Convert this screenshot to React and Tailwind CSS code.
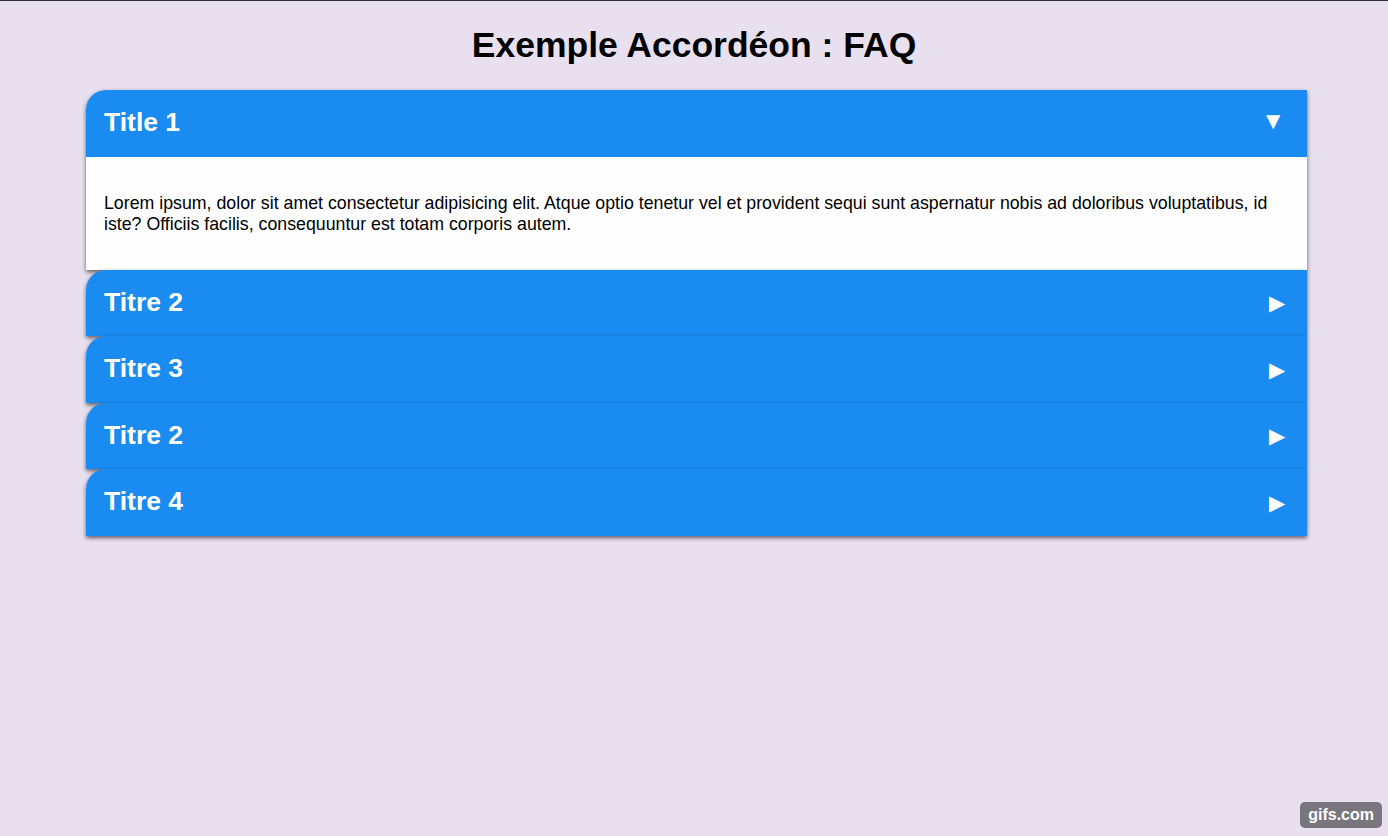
import { useState } from "react";

const items = [
  {
    title: "Title 1",
    body: "Lorem ipsum, dolor sit amet consectetur adipisicing elit. Atque optio tenetur vel et provident sequi sunt aspernatur nobis ad doloribus voluptatibus, id iste? Officiis facilis, consequuntur est totam corporis autem.",
  },
  { title: "Titre 2", body: "Lorem ipsum dolor sit amet consectetur adipisicing elit." },
  { title: "Titre 3", body: "Lorem ipsum dolor sit amet consectetur adipisicing elit." },
  { title: "Titre 2", body: "Lorem ipsum dolor sit amet consectetur adipisicing elit." },
  { title: "Titre 4", body: "Lorem ipsum dolor sit amet consectetur adipisicing elit." },
];

export default function App() {
  const [open, setOpen] = useState(0);

  return (
    <div className="relative min-h-[836px] bg-[#e9e0ef] border-t border-[#2d2f36] font-['Liberation_Sans',Arial,sans-serif] overflow-hidden">
      <h1 className="text-center text-[35.5px] font-bold text-black pt-[22px] pb-[23px] leading-[44px]">
        Exemple Accordéon : FAQ
      </h1>

      <div className="ml-[86px] mr-[81px] flex flex-col">
        {items.map((item, i) => (
          <div
            key={i}
            className="relative rounded-tl-[20px] shadow-[0_2px_4px_rgba(0,0,0,0.6)] overflow-hidden"
          >
            <button
              onClick={() => setOpen(open === i ? -1 : i)}
              className="w-full h-[66.5px] flex items-center justify-between bg-[#1a8bf0] text-white pl-[18px] pr-[22px] text-left cursor-pointer"
            >
              <span className="text-[26.5px] font-bold">{item.title}</span>
              {open === i ? (
                <span className="text-[24px] leading-none -mt-[5px]">▼</span>
              ) : (
                <span className="text-[21px] leading-none">▶</span>
              )}
            </button>
            {open === i && (
              <div className="bg-[#fefefe] pl-[18px] pr-[24px] pt-[36px] pb-[35px] text-[17.75px] leading-[21px] text-black">
                {item.body}
              </div>
            )}
          </div>
        ))}
      </div>

      <div className="absolute right-[6px] bottom-[8px] bg-[#5b5b5f]/80 rounded-[5px] px-[8px] py-[1px] text-white text-[16px] font-bold">
        gifs.com
      </div>
    </div>
  );
}
